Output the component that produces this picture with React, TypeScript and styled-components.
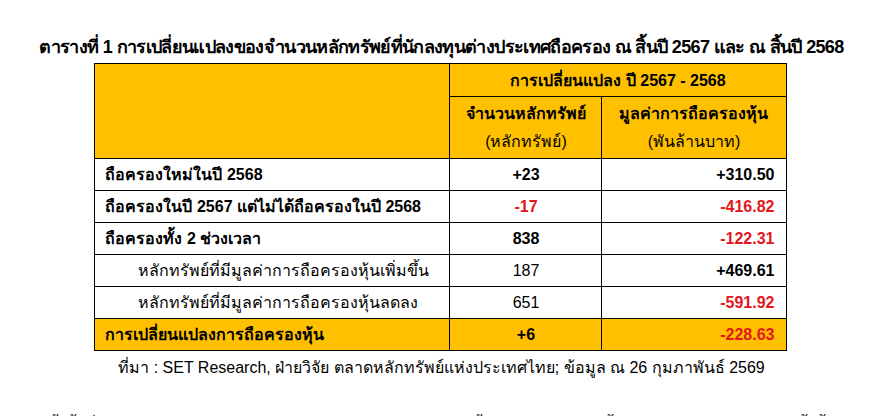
import styled, { createGlobalStyle } from "styled-components";

const GlobalStyle = createGlobalStyle`
    html, body {
        margin: 0;
        padding: 0;
        background: #ffffff;
        overflow: hidden;
    }
    body {
        font-family: "Liberation Sans", Arial, sans-serif;
        color: #000;
    }
`;

type Row = {
    label: string;
    count: string;
    value: string;
    sub?: boolean;
    countRed?: boolean;
    valueRed?: boolean;
    total?: boolean;
};

const rows: Row[] = [
    {label: "ถือครองใหม่ในปี 2568", count: "+23", value: "+310.50"},
    {label: "ถือครองในปี 2567 แต่ไม่ได้ถือครองในปี 2568", count: "-17", value: "-416.82", countRed: true, valueRed: true},
    {label: "ถือครองทั้ง 2 ช่วงเวลา", count: "838", value: "-122.31", valueRed: true},
    {label: "หลักทรัพย์ที่มีมูลค่าการถือครองหุ้นเพิ่มขึ้น", count: "187", value: "+469.61", sub: true},
    {label: "หลักทรัพย์ที่มีมูลค่าการถือครองหุ้นลดลง", count: "651", value: "-591.92", sub: true, valueRed: true},
    {label: "การเปลี่ยนแปลงการถือครองหุ้น", count: "+6", value: "-228.63", total: true, valueRed: true},
];

export default function App() {
    return (
        <Page>
            <GlobalStyle/>
            <Title>ตารางที่ 1 การเปลี่ยนแปลงของจำนวนหลักทรัพย์ที่นักลงทุนต่างประเทศถือครอง ณ สิ้นปี 2567 และ ณ สิ้นปี 2568</Title>
            <Table>
                <colgroup>
                    <col style={{width: 355}}/>
                    <col style={{width: 152}}/>
                    <col style={{width: 184}}/>
                </colgroup>
                <thead>
                    <tr>
                        <HeadCell rowSpan={2}/>
                        <HeadCell colSpan={2} $top>การเปลี่ยนแปลง ปี 2567 - 2568</HeadCell>
                    </tr>
                    <tr>
                        <HeadCell>
                            <HeadMain>จำนวนหลักทรัพย์</HeadMain>
                            <HeadUnit>(หลักทรัพย์)</HeadUnit>
                        </HeadCell>
                        <HeadCell>
                            <HeadMain>มูลค่าการถือครองหุ้น</HeadMain>
                            <HeadUnit>(พันล้านบาท)</HeadUnit>
                        </HeadCell>
                    </tr>
                </thead>
                <tbody>
                    {rows.map((r) => (
                        <BodyRow key={r.label} $total={r.total}>
                            <LabelCell $sub={r.sub}>{r.label}</LabelCell>
                            <CountCell $sub={r.sub} $red={r.countRed}>{r.count}</CountCell>
                            <ValueCell $red={r.valueRed}>{r.value}</ValueCell>
                        </BodyRow>
                    ))}
                </tbody>
            </Table>
            <Source>ที่มา : SET Research, ฝ่ายวิจัย ตลาดหลักทรัพย์แห่งประเทศไทย; ข้อมูล ณ 26 กุมภาพันธ์ 2569</Source>
            <Paragraph>
                ทั้งนี้ เมื่อพิจารณาการถือครองหุ้นของนักลงทุนต่างประเทศ ณ สิ้นปี 2568 เทียบกับสิ้นปี 2567 พบว่ามูลค่าลดลงทั้งสิ้น
            </Paragraph>
        </Page>
    );
}

const Page = styled.div`
    width: 883px;
    height: 416px;
    display: flex;
    flex-direction: column;
    align-items: center;
    padding-top: 35px;
    box-sizing: border-box;
`;

const Title = styled.div`
    font-weight: 700;
    font-size: 18px;
    line-height: 24px;
    letter-spacing: -0.65px;
    white-space: nowrap;
    margin-bottom: 4px;
`;

const Table = styled.table`
    border-collapse: collapse;
    table-layout: fixed;
    width: 692px;
    margin-left: -2px;
    border: 1.5px solid #000;
    font-size: 16px;
`;

const HeadCell = styled.th<{ $top?: boolean }>`
    background: #ffc000;
    border: 1px solid #000;
    padding: 0;
    height: ${({$top}) => ($top ? "32px" : "61px")};
    font-weight: 700;
    text-align: center;
    vertical-align: middle;
`;

const HeadMain = styled.div`
    font-weight: 700;
    line-height: 28px;
`;

const HeadUnit = styled.div`
    font-weight: 400;
    line-height: 28px;
`;

const BodyRow = styled.tr<{ $total?: boolean }>`
    height: 32px;
    background: ${({$total}) => ($total ? "#ffc000" : "#ffffff")};
`;

const LabelCell = styled.td<{ $sub?: boolean }>`
    border: 1px solid #000;
    padding: ${({$sub}) => ($sub ? "0 0 0 43px" : "0 10px")};
    font-weight: ${({$sub}) => ($sub ? 400 : 700)};
    text-align: left;
    white-space: nowrap;
`;

const CountCell = styled.td<{ $sub?: boolean; $red?: boolean }>`
    border: 1px solid #000;
    padding: 0;
    text-align: center;
    font-weight: ${({$sub}) => ($sub ? 400 : 700)};
    color: ${({$red}) => ($red ? "#e3161b" : "#000")};
`;

const ValueCell = styled.td<{ $red?: boolean }>`
    border: 1px solid #000;
    padding: 0 11px 0 0;
    text-align: right;
    font-weight: 700;
    color: ${({$red}) => ($red ? "#e3161b" : "#000")};
`;

const Source = styled.div`
    font-size: 16px;
    line-height: 22px;
    margin-top: 6px;
    white-space: nowrap;
`;

const Paragraph = styled.div`
    font-size: 16px;
    line-height: 22px;
    margin-top: 36px;
    white-space: nowrap;
`;
